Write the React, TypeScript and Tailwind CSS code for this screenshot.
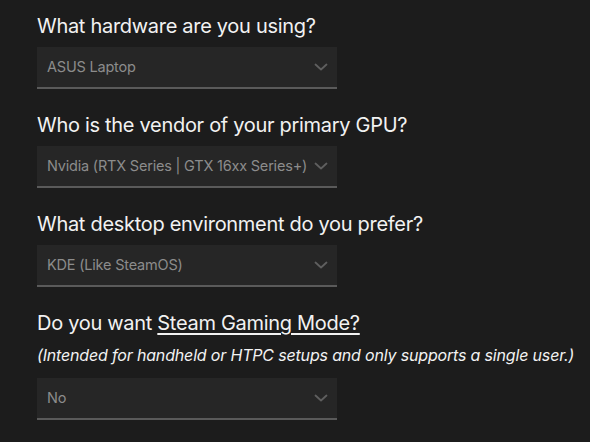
import React from "react";

function Chevron() {
  return (
    <svg width="14" height="8" viewBox="0 0 14 8" fill="none" className="shrink-0">
      <path d="M1.5 1.5 L7 6.5 L12.5 1.5" stroke="#5f5f5f" strokeWidth="1.8" strokeLinecap="round" strokeLinejoin="round" />
    </svg>
  );
}

function Select({ value }: { value: string }) {
  return (
    <div className="w-[300px] h-[42px] bg-[#262626] border-b-2 border-[#5a5a5a] flex items-center pl-[10px] pr-[9px] justify-between">
      <span className="text-[14.5px] tracking-[-0.2px] text-[#8c8c8c] whitespace-nowrap">{value}</span>
      <Chevron />
    </div>
  );
}

export default function App() {
  return (
    <div
      className="w-[590px] h-[442px] bg-[#1c1c1c] text-[#f2f2f2] pl-[37px] pt-[12px] overflow-hidden"
      style={{ fontFamily: "Inter, 'Noto Sans', sans-serif" }}
    >
      <div className="flex flex-col">
        <h2 className="text-[20px] tracking-[-0.3px] leading-[28px] mb-[7px]">What hardware are you using?</h2>
        <Select value="ASUS Laptop" />
        <h2 className="text-[20px] tracking-[-0.3px] leading-[28px] mb-[7px] mt-[22px]">Who is the vendor of your primary GPU?</h2>
        <Select value="Nvidia (RTX Series | GTX 16xx Series+)" />
        <h2 className="text-[20px] tracking-[-0.3px] leading-[28px] mb-[7px] mt-[22px]">What desktop environment do you prefer?</h2>
        <Select value="KDE (Like SteamOS)" />
        <h2 className="text-[20px] tracking-[-0.3px] leading-[28px] mt-[22px]">
          Do you want <span className="underline underline-offset-[3px]">Steam Gaming Mode?</span>
        </h2>
        <p className="text-[16px] tracking-[-0.17px] italic leading-[22px] mt-[7px] mb-[12px] whitespace-nowrap">
          (Intended for handheld or HTPC setups and only supports a single user.)
        </p>
        <Select value="No" />
      </div>
    </div>
  );
}
